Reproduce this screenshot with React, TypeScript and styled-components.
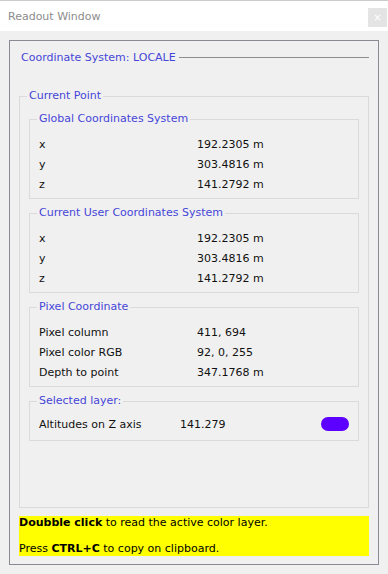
import React from "react";
import styled, { createGlobalStyle } from "styled-components";

const GlobalStyle = createGlobalStyle`
  html, body {
    margin: 0;
    background: #f0f0f0;
    font-family: "DejaVu Sans", "Liberation Sans", sans-serif;
    font-size: 11px;
    color: #111;
  }
`;

const Window = styled.div`
  width: 388px;
  height: 574px;
  display: flex;
  flex-direction: column;
  box-sizing: border-box;
`;

const TitleBar = styled.div`
  height: 30px;
  border-top: 1px solid #cbcbcb;
  background: #fff;
  display: flex;
  align-items: flex-start;
  padding-left: 8px;
`;

const Title = styled.span`
  margin-top: 9px;
  color: #8c8c8c;
  line-height: 14px;
`;

const CloseButton = styled.div`
  margin: 7px 1px 0 auto;
  width: 19px;
  height: 19px;
  background: #e4e4e4;
  color: #fff;
  font-size: 10px;
  line-height: 19px;
  text-align: center;
`;

const Body = styled.div`
  flex: 1;
  display: flex;
  padding: 9px;
`;

const Frame = styled.div`
  flex: 1;
  display: flex;
  flex-direction: column;
  border: 1px solid #8a8a94;
  padding: 8px 9px 8px 9px;
`;

const Header = styled.div`
  height: 16px;
  display: flex;
  align-items: center;
  gap: 3px;
  padding-left: 2px;
  color: #4646d8;
`;

const HeaderRule = styled.div`
  flex: 1;
  height: 1px;
  background: #8c8c8c;
`;

const Group = styled.fieldset<{ $grow?: boolean; $pad?: string }>`
  margin: ${(p) => (p.$grow ? "24px 0 0 0" : "0")};
  flex: ${(p) => (p.$grow ? 1 : "none")};
  min-width: 0;
  border: 1px solid #dadada;
  padding: ${(p) => p.$pad || (p.$grow ? "9px 9px 8px" : "8px 9px 4px 9px")};
  display: flex;
  flex-direction: column;
  gap: 7px;
`;

const Legend = styled.legend`
  color: #4646d8;
  padding: 0 2px;
  margin-left: -2px;
  line-height: 14px;
`;

const Rows = styled.div<{ $cols?: string }>`
  display: grid;
  grid-template-columns: ${(p) => p.$cols || "158px 1fr"};
  grid-auto-rows: 20px;
  align-items: center;
`;

const Swatch = styled.div<{ $color: string }>`
  width: 28px;
  height: 14px;
  border-radius: 7px;
  background: ${(p) => p.$color};
`;

const Note = styled.div`
  margin-top: 8px;
  background: #ffff00;
  display: flex;
  flex-direction: column;
  gap: 12px;
  line-height: 14px;
  color: #000;
`;

type Pair = [string, string];

const xyz: Pair[] = [
  ["x", "192.2305 m"],
  ["y", "303.4816 m"],
  ["z", "141.2792 m"],
];

const pixel: Pair[] = [
  ["Pixel column", "411, 694"],
  ["Pixel color RGB", "92, 0, 255"],
  ["Depth to point", "347.1768 m"],
];

const ValueGroup = ({ title, rows }: { title: string; rows: Pair[] }) => (
  <Group>
    <Legend>{title}</Legend>
    <Rows>
      {rows.map(([k, v]) => (
        <React.Fragment key={k}>
          <span>{k}</span>
          <span>{v}</span>
        </React.Fragment>
      ))}
    </Rows>
  </Group>
);

export default function App() {
  return (
    <Window>
      <GlobalStyle />
      <TitleBar>
        <Title>Readout Window</Title>
        <CloseButton>×</CloseButton>
      </TitleBar>
      <Body>
        <Frame>
          <Header>
            Coordinate System: LOCALE
            <HeaderRule />
          </Header>
          <Group $grow>
            <Legend>Current Point</Legend>
            <ValueGroup title="Global Coordinates System" rows={xyz} />
            <ValueGroup title="Current User Coordinates System" rows={xyz} />
            <ValueGroup title="Pixel Coordinate" rows={pixel} />
            <Group $pad="6px 9px 6px">
              <Legend>Selected layer:</Legend>
              <Rows $cols="141px 1fr 28px">
                <span>Altitudes on Z axis</span>
                <span>141.279</span>
                <Swatch $color="#5c00ff" />
              </Rows>
            </Group>
          </Group>
          <Note>
            <span>
              <b>Doubble click</b> to read the active color layer.
            </span>
            <span>
              Press <b>CTRL+C</b> to copy on clipboard.
            </span>
          </Note>
        </Frame>
      </Body>
    </Window>
  );
}
